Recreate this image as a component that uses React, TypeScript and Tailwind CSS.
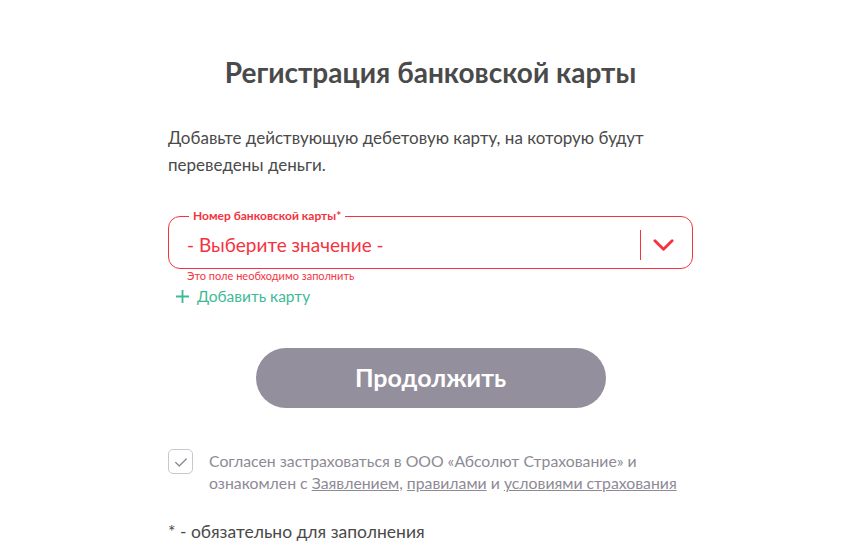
import React from "react";

const App: React.FC = () => {
  return (
    <div className="min-h-[554px] w-full bg-white font-['Lato','Noto_Sans',sans-serif]">
      <div className="mx-auto flex w-[525px] flex-col pt-[52px]">
        {/* Header */}
        <h1 className="text-center text-[28px] font-bold leading-[40px] text-[#4a4a4a]">
          Регистрация банковской карты
        </h1>

        <p className="mt-[32px] text-[17px] leading-[27px] text-[#4a4a4a]">
          Добавьте действующую дебетовую карту, на которую будут переведены деньги.
        </p>

        {/* Select field */}
        <fieldset className="mt-[31px] h-[60px] rounded-[12px] border border-[#f5333f] pl-[18px] pr-[18px]">
          <legend className="ml-[2px] px-[4px] text-[12px] font-bold leading-[14px] text-[#f5333f]">
            Номер банковской карты*
          </legend>
          <div className="flex h-[44px] items-center">
            <span className="flex-1 text-[19px] text-[#f5333f]">- Выберите значение -</span>
            <div className="h-[30px] w-px bg-[#f5333f]" />
            <svg viewBox="0 0 22 14" className="ml-[12px] h-[14px] w-[21px]" fill="none" stroke="#f5333f" strokeWidth={3} strokeLinecap="round" strokeLinejoin="round">
              <path d="M2 2.5l9 9 9-9" />
            </svg>
          </div>
        </fieldset>
        <span className="ml-[19px] text-[11px] leading-[14px] text-[#f5333f]">
          Это поле необходимо заполнить
        </span>
        <button className="ml-[8px] mt-[3px] flex items-center gap-[8px] text-[15.5px] leading-[20px] text-[#3fba97]">
          <svg viewBox="0 0 14 14" className="h-[13px] w-[13px]" stroke="#3fba97" strokeWidth={2}>
            <path d="M7 0v14M0 7h14" />
          </svg>
          Добавить карту
        </button>

        {/* Button */}
        <div className="mt-[42px] flex justify-center">
          <button className="h-[60px] w-[350px] rounded-full bg-[#948f9c] text-[25px] font-bold text-white">
            Продолжить
          </button>
        </div>

        {/* Agreement */}
        <div className="mt-[42px] flex items-start gap-[16px]">
          <div className="mt-[-1px] flex h-[25px] w-[25px] shrink-0 items-center justify-center rounded-[5px] border border-[#c9c6cd]">
            <svg viewBox="0 0 16 16" className="h-[14px] w-[14px]" fill="none" stroke="#8e8a95" strokeWidth={1.6} strokeLinecap="round" strokeLinejoin="round">
              <path d="M2 8.5l4 4 8-8" />
            </svg>
          </div>
          <div className="flex flex-col text-[15.8px] leading-[22px] text-[#8e8a95]">
            <span>Согласен застраховаться в ООО «Абсолют Страхование» и</span>
            <span>
              ознакомлен с <span className="underline">Заявлением,</span>{" "}
              <span className="underline">правилами</span> и{" "}
              <span className="underline">условиями страхования</span>
            </span>
          </div>
        </div>

        <p className="mt-[26px] text-[17.5px] leading-[24px] text-[#4a4a4a]">* - обязательно для заполнения</p>
      </div>
    </div>
  );
};

export default App;
